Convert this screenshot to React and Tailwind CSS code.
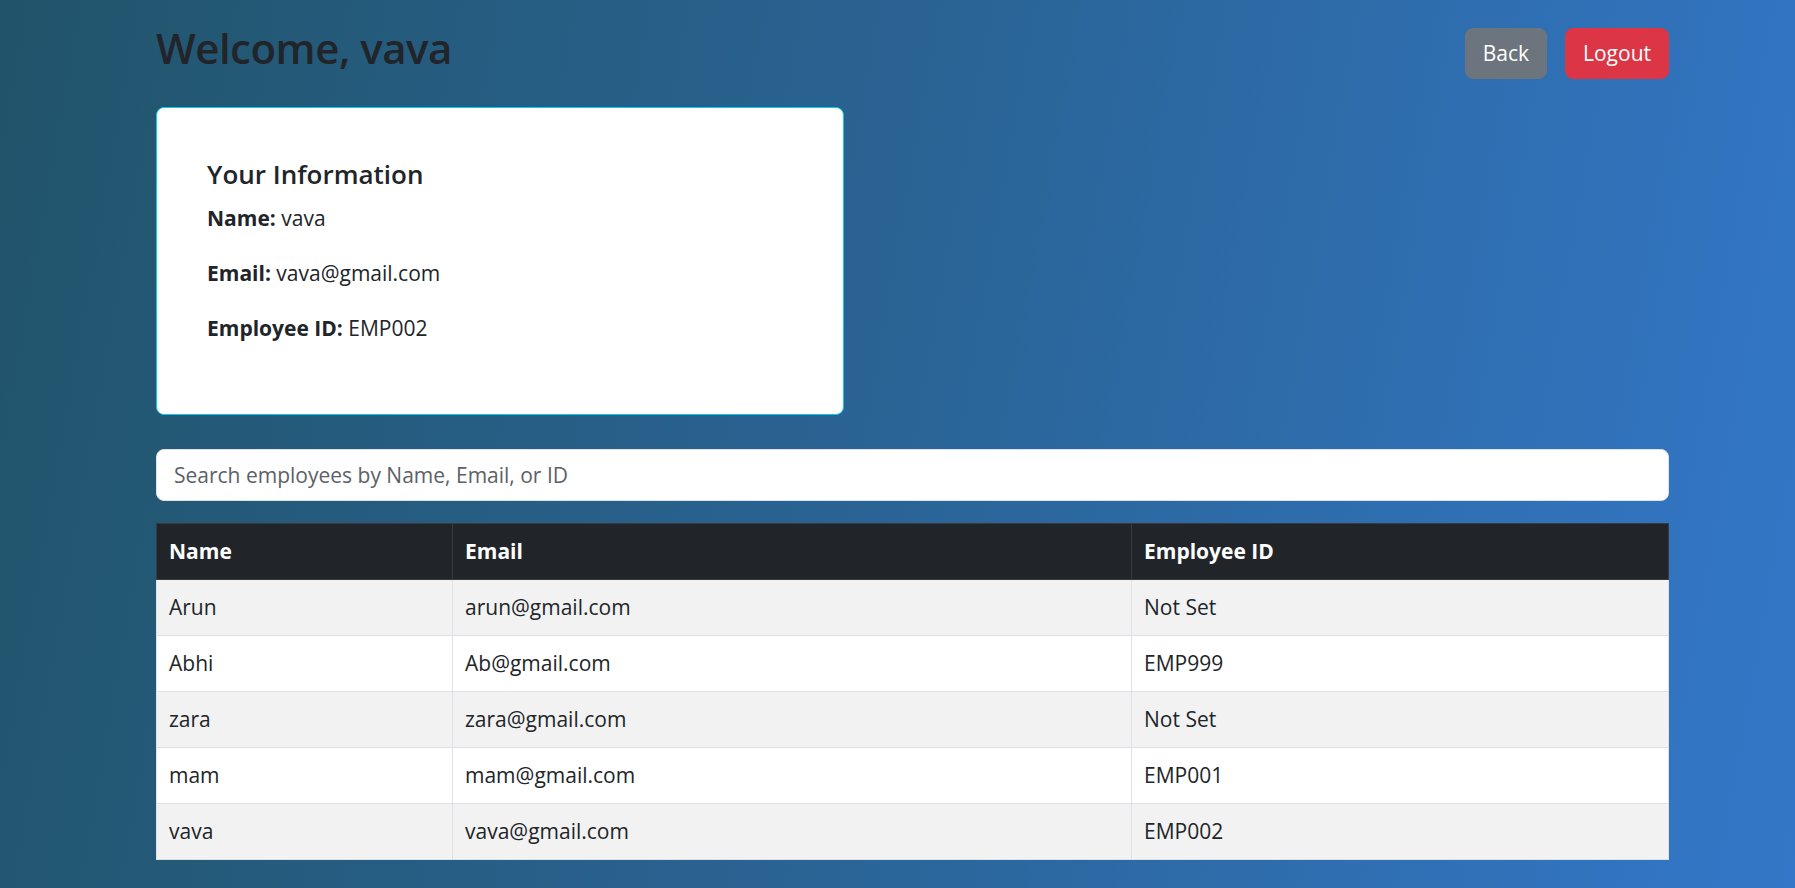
import { useState } from "react";

const employees = [
  { name: "Arun", email: "arun@gmail.com", empId: "Not Set" },
  { name: "Abhi", email: "Ab@gmail.com", empId: "EMP999" },
  { name: "zara", email: "zara@gmail.com", empId: "Not Set" },
  { name: "mam", email: "mam@gmail.com", empId: "EMP001" },
  { name: "vava", email: "vava@gmail.com", empId: "EMP002" },
];

const App = () => {
  const [search, setSearch] = useState("");

  const filtered = employees.filter((e) => {
    const q = search.toLowerCase();
    return (
      e.name.toLowerCase().includes(q) ||
      e.email.toLowerCase().includes(q) ||
      e.empId.toLowerCase().includes(q)
    );
  });

  return (
    <div className="min-h-screen bg-[linear-gradient(100deg,#21546a_0%,#2a6496_50%,#3377c8_100%)] pl-[156px] pr-[126px] pt-[21px] pb-[29px] font-['Open_Sans','Noto_Sans',sans-serif] text-[#212529]">
      {/* HEADER */}
      <div className="flex items-center justify-between">
        <h2 className="text-[42px] leading-[53px] font-semibold mb-[11px] tracking-[-0.5px]">
          Welcome, vava
        </h2>
        <div className="flex items-center gap-[18px]">
          <button className="bg-[#6c757d] text-white text-[21px] leading-[33px] px-[17px] py-[8px] rounded-[8px] border border-[#6c757d]">
            Back
          </button>
          <button className="bg-[#dc3545] text-white text-[21px] leading-[33px] px-[17px] py-[8px] rounded-[8px] border border-[#dc3545]">
            Logout
          </button>
        </div>
      </div>

      {/* INFO CARD */}
      <div className="mt-[22px] w-[688px] bg-white border border-[#0dcaf0] rounded-[8px] px-[50px] pt-[50px] pb-[47px]">
        <h5 className="text-[26px] leading-[33px] font-semibold mb-[11px]">
          Your Information
        </h5>
        <p className="text-[21px] leading-[33px] mb-[22px]">
          <strong className="font-bold">Name:</strong> vava
        </p>
        <p className="text-[21px] leading-[33px] mb-[22px]">
          <strong className="font-bold">Email:</strong> vava@gmail.com
        </p>
        <p className="text-[21px] leading-[33px] mb-[22px]">
          <strong className="font-bold">Employee ID:</strong> EMP002
        </p>
      </div>

      {/* SEARCH */}
      <input
        type="text"
        value={search}
        onChange={(e) => setSearch(e.target.value)}
        placeholder="Search employees by Name, Email, or ID"
        className="mt-[34px] block w-full h-[52px] bg-white border border-[#dee2e6] rounded-[8px] px-[17px] text-[21px] leading-[33px] text-[#212529] placeholder:text-[#5c6166] outline-none"
      />

      {/* TABLE */}
      <table className="mt-[22px] w-full border-collapse table-fixed text-[21px] leading-[33px]">
        <thead>
          <tr className="bg-[#212529] text-white">
            <th className="w-[296px] text-left font-bold px-[12px] py-[11px] border border-[#373b3e]">
              Name
            </th>
            <th className="w-[679px] text-left font-bold px-[12px] py-[11px] border border-[#373b3e]">
              Email
            </th>
            <th className="text-left font-bold px-[12px] py-[11px] border border-[#373b3e]">
              Employee ID
            </th>
          </tr>
        </thead>
        <tbody>
          {filtered.map((emp, i) => (
            <tr
              key={emp.email}
              className={i % 2 === 0 ? "bg-[#f2f2f2]" : "bg-white"}
            >
              <td className="px-[12px] py-[11px] border border-[#dee2e6]">
                {emp.name}
              </td>
              <td className="px-[12px] py-[11px] border border-[#dee2e6]">
                {emp.email}
              </td>
              <td className="px-[12px] py-[11px] border border-[#dee2e6]">
                {emp.empId}
              </td>
            </tr>
          ))}
        </tbody>
      </table>
    </div>
  );
};

export default App;
